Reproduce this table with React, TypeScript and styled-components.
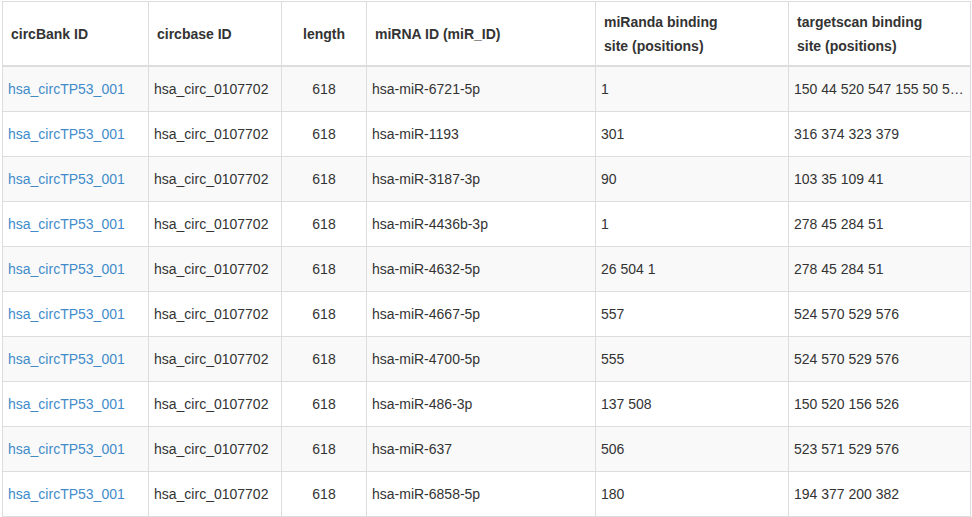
import React from "react"
import styled, { createGlobalStyle } from "styled-components"

const GlobalStyle = createGlobalStyle`
  html, body {
    margin: 0;
    padding: 0;
    background: #fff;
  }
  body {
    font-family: "Liberation Sans", Arial, sans-serif;
    font-size: 14px;
    color: #333;
  }
`

const Wrapper = styled.div`
  padding: 1px 0 0 2px;
`

const Table = styled.table`
  width: 968px;
  table-layout: fixed;
  border-collapse: collapse;
  border: 1px solid #ddd;
`

const HeadCell = styled.th<{ $center?: boolean }>`
  padding: 8px 8px 7px;
  line-height: 24px;
  font-weight: bold;
  text-align: ${(p) => (p.$center ? "center" : "left")};
  vertical-align: middle;
  border: 1px solid #ddd;
  border-bottom: 2px solid #ddd;
`

const Row = styled.tr`
  &:nth-child(odd) {
    background: #f9f9f9;
  }
`

const Cell = styled.td<{ $center?: boolean }>`
  padding: 12px 5px;
  line-height: 20px;
  text-align: ${(p) => (p.$center ? "center" : "left")};
  border: 1px solid #ddd;
  white-space: nowrap;
  overflow: hidden;
  text-overflow: ellipsis;
`

const Link = styled.a`
  color: #428bca;
  text-decoration: none;
`

const widths = [146, 133, 85, 229, 193, 182]

const rows = [
  ["hsa-miR-6721-5p", "1", "150 44 520 547 155 50 525 552"],
  ["hsa-miR-1193", "301", "316 374 323 379"],
  ["hsa-miR-3187-3p", "90", "103 35 109 41"],
  ["hsa-miR-4436b-3p", "1", "278 45 284 51"],
  ["hsa-miR-4632-5p", "26 504 1", "278 45 284 51"],
  ["hsa-miR-4667-5p", "557", "524 570 529 576"],
  ["hsa-miR-4700-5p", "555", "524 570 529 576"],
  ["hsa-miR-486-3p", "137 508", "150 520 156 526"],
  ["hsa-miR-637", "506", "523 571 529 576"],
  ["hsa-miR-6858-5p", "180", "194 377 200 382"],
]

export default function App() {
  return (
    <Wrapper>
      <GlobalStyle />
      <Table>
        <colgroup>
          {widths.map((w, i) => (
            <col key={i} style={{ width: w }} />
          ))}
        </colgroup>
        <thead>
          <tr>
            <HeadCell>circBank ID</HeadCell>
            <HeadCell>circbase ID</HeadCell>
            <HeadCell $center>length</HeadCell>
            <HeadCell>miRNA ID (miR_ID)</HeadCell>
            <HeadCell>
              miRanda binding
              <br />
              site (positions)
            </HeadCell>
            <HeadCell>
              targetscan binding
              <br />
              site (positions)
            </HeadCell>
          </tr>
        </thead>
        <tbody>
          {rows.map((r, i) => (
            <Row key={i}>
              <Cell>
                <Link href="#">hsa_circTP53_001</Link>
              </Cell>
              <Cell>hsa_circ_0107702</Cell>
              <Cell $center>618</Cell>
              <Cell>{r[0]}</Cell>
              <Cell>{r[1]}</Cell>
              <Cell>{r[2]}</Cell>
            </Row>
          ))}
        </tbody>
      </Table>
    </Wrapper>
  )
}
